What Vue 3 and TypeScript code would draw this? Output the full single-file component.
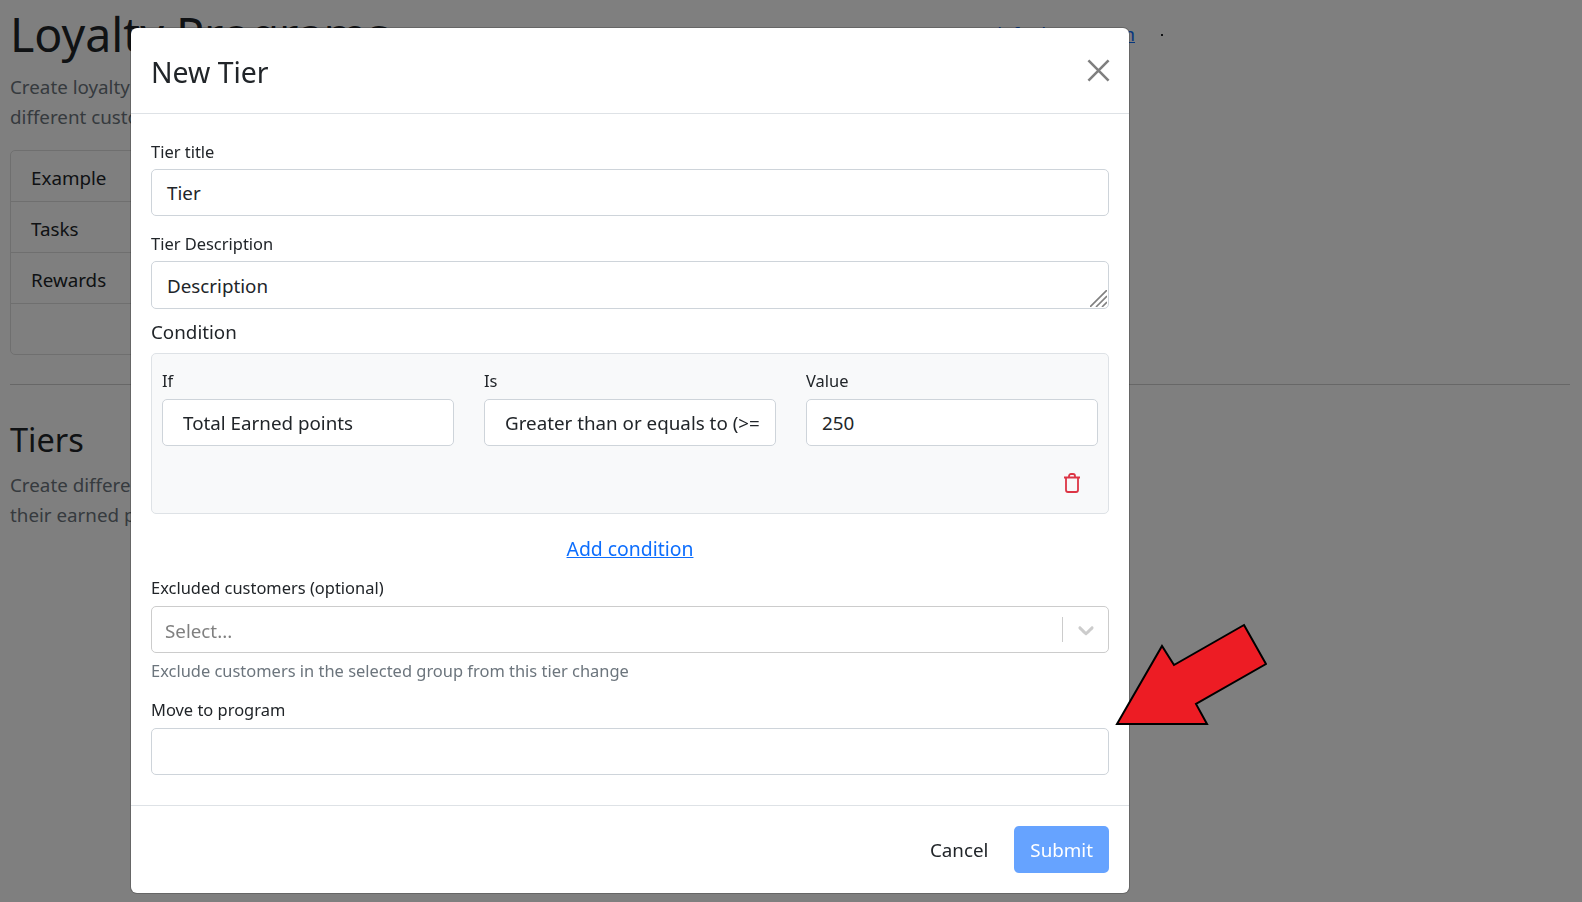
<script setup lang="ts">
const sections = ['Example', 'Tasks', 'Rewards', '']
</script>

<template>
  <div class="page">
    <div class="page-head">
      <h1>Loyalty Programs</h1>
      <a class="docs-link" href="#">default program</a>
      <span class="dot"></span>
    </div>
    <p class="muted">
      Create loyalty programs and reward your customers with points for completing tasks. Use programs to target<br />
      different customer groups.
    </p>
    <div class="list">
      <div v-for="(s, i) in sections" :key="i" class="list-row">{{ s }}</div>
    </div>
    <hr />
    <h2>Tiers</h2>
    <p class="muted tiers-text">
      Create different tiers to move customers between loyalty programs depending on<br />
      their earned points.
    </p>
  </div>

  <div class="overlay">
    <div class="modal">
      <div class="modal-header">
        <h5>New Tier</h5>
        <button class="close" aria-label="Close">
          <svg viewBox="0 0 16 16" width="23" height="23">
            <path d="M1 1 15 15M15 1 1 15" stroke="#7f7f7f" stroke-width="1.8" fill="none" />
          </svg>
        </button>
      </div>

      <div class="modal-body">
        <label class="small-label">Tier title</label>
        <div class="control">Tier</div>

        <label class="small-label second">Tier Description</label>
        <div class="control textarea">
          Description
          <svg class="grip" viewBox="0 0 17 17" width="17" height="17">
            <path d="M0 17 17 0M6 17 17 6M12 17 17 12" stroke="#808080" stroke-width="1.6" fill="none" />
          </svg>
        </div>

        <div class="cond-title">Condition</div>
        <div class="cond-box">
          <div class="cond-grid">
            <div>
              <label class="small-label">If</label>
              <div class="control select"><span class="clip">Total Earned points</span></div>
            </div>
            <div>
              <label class="small-label">Is</label>
              <div class="control select"><span class="clip">Greater than or equals to (&gt;=)</span></div>
            </div>
            <div>
              <label class="small-label">Value</label>
              <div class="control">250</div>
            </div>
          </div>
          <div class="cond-actions">
            <svg viewBox="0 0 16 20" width="16" height="20" fill="none" stroke="#dc3545" stroke-width="1.8">
              <path d="M0 4.5H16M2 4.5V17a2 2 0 0 0 2 2H12a2 2 0 0 0 2-2V4.5M5 4.5V3a2 2 0 0 1 2-2H9a2 2 0 0 1 2 2V4.5" />
            </svg>
          </div>
        </div>

        <div class="add-row"><a href="#">Add condition</a></div>

        <label class="small-label">Excluded customers (optional)</label>
        <div class="picker">
          <span class="placeholder">Select...</span>
          <span class="picker-sep"></span>
          <svg viewBox="0 0 20 20" width="26" height="26" fill="#cccccc">
            <path d="M4.516 7.548c.436-.446 1.043-.481 1.576 0L10 11.295l3.908-3.747c.533-.481 1.141-.446 1.574 0 .436.445.408 1.197 0 1.615-.406.418-4.695 4.502-4.695 4.502a1.095 1.095 0 0 1-1.576 0S4.924 9.581 4.516 9.163c-.409-.418-.436-1.17 0-1.615z" />
          </svg>
        </div>
        <div class="help">Exclude customers in the selected group from this tier change</div>

        <label class="small-label third">Move to program</label>
        <div class="control"></div>
      </div>

      <div class="modal-footer">
        <button class="btn-link">Cancel</button>
        <button class="btn-primary">Submit</button>
      </div>
    </div>

    <svg class="arrow" viewBox="0 0 160 110" width="160" height="110">
      <polygon
        points="137,2 159,41 89,81 100,101 10,101 55,23 67,42"
        fill="#ed1c24"
        stroke="#000"
        stroke-width="2"
      />
    </svg>
  </div>
</template>

<style>
html,
body {
  margin: 0;
  background: #fff;
}
</style>

<style scoped>
* {
  box-sizing: border-box;
}

.page {
  padding: 0 12px 0 10px;
  height: 902px;
  overflow: hidden;
  font-family: 'Noto Sans', 'Open Sans', sans-serif;
  color: #212529;
}

.page-head {
  display: flex;
  align-items: center;
  height: 68px;
}

h1 {
  margin: 0;
  flex: 1;
  font-size: 46.5px;
  font-weight: 400;
  line-height: 68px;
}

.docs-link {
  margin: 0 26px 0 0;
  font-size: 18.8px;
  color: #0d6efd;
}

.dot {
  width: 2px;
  height: 2px;
  margin: 2px 407px 0 0;
  background: #212529;
}

.muted {
  margin: 4px 0 0;
  font-size: 18.8px;
  line-height: 30px;
  color: #6c757d;
}

.list {
  margin-top: 18px;
  width: 500px;
  border: 1px solid #dfdfdf;
  border-radius: 5px;
}

.list-row {
  height: 51px;
  padding: 0 20px;
  font-size: 18.8px;
  line-height: 54px;
  border-bottom: 1px solid #dfdfdf;
}

.list-row:last-child {
  height: 50px;
  border-bottom: 0;
}

hr {
  margin: 29px 0 0;
  border: 0;
  border-top: 1px solid #cfcfcf;
}

h2 {
  margin: 30px 0 0;
  font-size: 32.5px;
  font-weight: 400;
  line-height: 50px;
}

.tiers-text {
  margin-top: 5px;
}

.overlay {
  position: fixed;
  inset: 0;
  padding: 28px 0 0 131px;
  background: rgba(0, 0, 0, 0.5);
  font-family: 'Noto Sans', 'Open Sans', sans-serif;
  color: #212529;
}

.modal {
  width: 998px;
  height: 865px;
  display: flex;
  flex-direction: column;
  background: #fff;
  border-radius: 6px;
  box-shadow: 0 0 0 1px rgba(0, 0, 0, 0.2);
}

.modal-header {
  height: 86px;
  flex: none;
  padding: 0 20px;
  display: flex;
  align-items: center;
  justify-content: space-between;
  border-bottom: 1px solid #dee2e6;
}

h5 {
  margin: 2px 0 0;
  font-size: 28.4px;
  font-weight: 400;
  line-height: 34px;
}

.close {
  padding: 0;
  border: 0;
  background: none;
  display: flex;
  margin: -1px -1px 0 0;
}

.modal-body {
  flex: 1;
  padding: 25px 20px 0;
}

.small-label {
  display: block;
  height: 30px;
  font-size: 16.45px;
  line-height: 26px;
}

.second {
  margin-top: 15px;
}

.third {
  margin-top: 13px;
  height: 31px;
}

.control {
  position: relative;
  height: 47px;
  padding: 0 15px;
  border: 1px solid #ced4da;
  border-radius: 5px;
  background: #fff;
  font-size: 18.8px;
  line-height: 47px;
  white-space: nowrap;
}

.textarea {
  height: 48px;
  line-height: 48px;
}

.grip {
  position: absolute;
  right: 1px;
  bottom: 1px;
}

.select {
  padding: 0 16px 0 20px;
}

.clip {
  display: block;
  overflow: hidden;
}

.cond-title {
  margin-top: 8px;
  font-size: 18.8px;
  line-height: 30px;
}

.cond-box {
  margin-top: 6px;
  height: 161px;
  padding: 14px 10px 0 10px;
  background: #f8f9fa;
  border: 1px solid #dee2e6;
  border-radius: 5px;
}

.cond-grid {
  display: grid;
  grid-template-columns: repeat(3, minmax(0, 1fr));
  gap: 30px;
}

.cond-grid .small-label {
  height: 31px;
}

.cond-actions {
  display: flex;
  justify-content: flex-end;
  padding: 27px 18px 0 0;
}

.add-row {
  margin-top: 20px;
  height: 30px;
  text-align: center;
  font-size: 19.4px;
  line-height: 30px;
}

.add-row a {
  color: #0d6efd;
}

.add-row + .small-label {
  margin-top: 11px;
  height: 31px;
}

.picker {
  height: 47px;
  padding: 0 9px 0 13px;
  display: flex;
  align-items: center;
  border: 1px solid #cccccc;
  border-radius: 5px;
}

.placeholder {
  flex: 1;
  padding-top: 2px;
  font-size: 18.8px;
  color: #808080;
}

.picker-sep {
  width: 1px;
  height: 25px;
  margin-right: 10px;
  background: #cccccc;
}

.help {
  margin-top: 5px;
  font-size: 16.45px;
  line-height: 26px;
  color: #6c757d;
}

.modal-footer {
  height: 88px;
  flex: none;
  padding: 0 20px;
  display: flex;
  align-items: center;
  justify-content: flex-end;
  gap: 10px;
  border-top: 1px solid #dee2e6;
}

.modal-footer button {
  height: 47px;
  padding: 0 16px;
  border: 0;
  border-radius: 5px;
  font-family: inherit;
  font-size: 18.8px;
}

.btn-link {
  background: none;
  color: #212529;
}

.btn-primary {
  background: #66a3ff;
  color: #fff;
}

.arrow {
  position: absolute;
  left: 1107px;
  top: 623px;
}
</style>
